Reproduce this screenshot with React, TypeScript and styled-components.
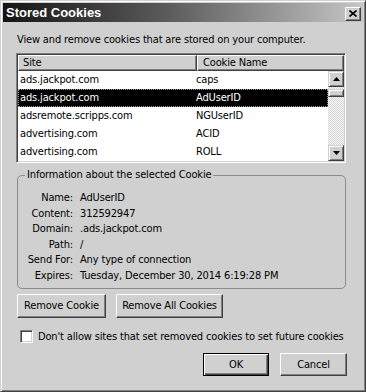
import React from "react";
import styled, { createGlobalStyle } from "styled-components";

const Global = createGlobalStyle`
  html, body { margin: 0; padding: 0; background: #d0d0d0; }
  body { font-family: "DejaVu Sans Condensed", "Liberation Sans", Arial, sans-serif; font-size: 11px; letter-spacing: -0.15px; color: #000; }
  * { box-sizing: border-box; }
`;

const Window = styled.div`
  width: 366px;
  height: 392px;
  background: #d0d0d0;
  border: 1px solid;
  border-color: #d0d0d0 #404040 #404040 #d0d0d0;
  box-shadow: inset 1px 1px #ffffff, inset -1px -1px #808080;
  padding: 2px;
  display: flex;
  flex-direction: column;
`;

const TitleBar = styled.div`
  height: 19px;
  background: linear-gradient(to right, #141414 0%, #5a5a5a 45%, #c6c6c6 100%);
  display: flex;
  align-items: center;
  justify-content: space-between;
  padding: 0 2px 0 3px;
`;

const TitleText = styled.span`
  color: #fff;
  font-family: "Liberation Sans", Arial, sans-serif;
  font-weight: bold;
  font-size: 13px;
  letter-spacing: 0;
`;

const CloseButton = styled.div`
  width: 16px;
  height: 14px;
  margin-top: 2px;
  background: #d0d0d0;
  border: 1px solid;
  border-color: #ffffff #404040 #404040 #ffffff;
  box-shadow: inset -1px -1px #808080;
  display: flex;
  align-items: center;
  justify-content: center;
`;

const Content = styled.div`
  padding: 0 0 0 13px;
  display: flex;
  flex-direction: column;
`;

const Description = styled.div`
  margin-top: 11px;
  line-height: 14px;
  padding-left: 1px;
  white-space: nowrap;
`;

const ListBox = styled.div`
  margin-top: 6px;
  width: 330px;
  height: 110px;
  border: 1px solid;
  border-color: #808080 #ffffff #ffffff #808080;
  box-shadow: inset 1px 1px #404040, inset -1px -1px #d0d0d0;
  padding: 1px;
  background: #fff;
  display: flex;
  flex-direction: column;
`;

const Header = styled.div`
  display: grid;
  grid-template-columns: 179px 1fr;
  height: 16px;
`;

const HeaderCell = styled.div<{ $pad: number }>`
  background: #d0d0d0;
  border: 1px solid;
  border-color: #ffffff #404040 #404040 #ffffff;
  box-shadow: inset -1px -1px #808080;
  padding-left: ${(p) => p.$pad}px;
  line-height: 13px;
  white-space: nowrap;
  overflow: hidden;
`;

const ListBody = styled.div`
  flex: 1;
  display: flex;
`;

const Rows = styled.div`
  flex: 1;
  display: flex;
  flex-direction: column;
`;

const Row = styled.div<{ $selected?: boolean }>`
  height: 18px;
  line-height: 18px;
  display: grid;
  grid-template-columns: 176px 1fr;
  padding-left: 2px;
  background: ${(p) => (p.$selected ? "#000" : "#fff")};
  color: ${(p) => (p.$selected ? "#fff" : "#000")};
  outline: ${(p) => (p.$selected ? "1px dotted #9a9a9a" : "none")};
  outline-offset: -1px;
  white-space: nowrap;
`;

const ScrollBar = styled.div`
  width: 16px;
  display: flex;
  flex-direction: column;
  background-color: #ffffff;
  background-image: conic-gradient(#d0d0d0 25%, #ffffff 0 50%, #d0d0d0 0 75%, #ffffff 0);
  background-size: 2px 2px;
`;

const ScrollButton = styled.div`
  width: 16px;
  height: 16px;
  background: #d0d0d0;
  border: 1px solid;
  border-color: #d0d0d0 #404040 #404040 #d0d0d0;
  box-shadow: inset 1px 1px #ffffff, inset -1px -1px #808080;
  display: flex;
  align-items: center;
  justify-content: center;
`;

const Thumb = styled.div`
  width: 16px;
  height: 8px;
  margin-top: 2px;
  background: #d0d0d0;
  border: 1px solid;
  border-color: #d0d0d0 #404040 #404040 #d0d0d0;
  box-shadow: inset 1px 1px #ffffff, inset -1px -1px #808080;
`;

const Track = styled.div`
  flex: 1;
`;

const GroupBox = styled.fieldset`
  margin: 5px 0 0 1px;
  width: 329px;
  padding: 8px 0 4px 0;
  border: 1px solid #8a8a8a;
  border-radius: 5px;
`;

const Legend = styled.legend`
  margin-left: 7px;
  padding: 0 2px;
  line-height: 14px;
`;

const InfoGrid = styled.div`
  display: grid;
  grid-template-columns: 55px 1fr;
  column-gap: 7px;
  grid-auto-rows: 15.6px;
  line-height: 15.6px;
`;

const Label = styled.div`
  text-align: right;
  white-space: nowrap;
`;

const Value = styled.div`
  white-space: nowrap;
`;

const ButtonRow = styled.div<{ $top: number; $end?: boolean }>`
  display: flex;
  gap: ${(p) => (p.$end ? 11 : 10)}px;
  margin-top: ${(p) => p.$top}px;
  margin-left: ${(p) => (p.$end ? 0 : 1)}px;
  justify-content: ${(p) => (p.$end ? "flex-end" : "flex-start")};
  width: 331px;
`;

const Button = styled.div<{ $w: number; $h: number; $default?: boolean }>`
  width: ${(p) => p.$w}px;
  height: ${(p) => p.$h}px;
  background: #d0d0d0;
  display: flex;
  align-items: center;
  justify-content: center;
  border: 1px solid;
  border-color: ${(p) =>
    p.$default ? "#000 #000 #000 #000" : "#ffffff #404040 #404040 #ffffff"};
  box-shadow: ${(p) =>
    p.$default
      ? "inset 1px 1px #ffffff, inset -1px -1px #404040, inset -2px -2px #808080"
      : "inset -1px -1px #808080"};
  white-space: nowrap;
`;

const CheckRow = styled.label`
  display: flex;
  align-items: center;
  margin-top: 12px;
  margin-left: 4px;
  gap: 5px;
  line-height: 14px;
  white-space: nowrap;
`;

const CheckBox = styled.span`
  width: 13px;
  height: 13px;
  flex: none;
  background: #fff;
  border: 1px solid;
  border-color: #808080 #ffffff #ffffff #808080;
  box-shadow: inset 1px 1px #404040, inset -1px -1px #d0d0d0;
`;

const Arrow = ({ up }: { up?: boolean }) => (
  <svg width="7" height="4" viewBox="0 0 7 4">
    <path d={up ? "M3.5 0 L7 4 L0 4 Z" : "M0 0 L7 0 L3.5 4 Z"} fill="#000" />
  </svg>
);

const rows = [
  ["ads.jackpot.com", "caps"],
  ["ads.jackpot.com", "AdUserID"],
  ["adsremote.scripps.com", "NGUserID"],
  ["advertising.com", "ACID"],
  ["advertising.com", "ROLL"],
];

const info = [
  ["Name:", "AdUserID"],
  ["Content:", "312592947"],
  ["Domain:", ".ads.jackpot.com"],
  ["Path:", "/"],
  ["Send For:", "Any type of connection"],
  ["Expires:", "Tuesday, December 30, 2014 6:19:28 PM"],
];

export default function App() {
  return (
    <>
      <Global />
      <Window>
        <TitleBar>
          <TitleText>Stored Cookies</TitleText>
          <CloseButton>
            <svg width="8" height="7" viewBox="0 0 8 7">
              <path d="M0.5 0.5 L7.5 6.5 M7.5 0.5 L0.5 6.5" stroke="#000" strokeWidth="1.6" />
            </svg>
          </CloseButton>
        </TitleBar>
        <Content>
          <Description>View and remove cookies that are stored on your computer.</Description>
          <ListBox>
            <Header>
              <HeaderCell $pad={4}>Site</HeaderCell>
              <HeaderCell $pad={5}>Cookie Name</HeaderCell>
            </Header>
            <ListBody>
              <Rows>
                {rows.map(([site, name], i) => (
                  <Row key={i} $selected={i === 1}>
                    <span>{site}</span>
                    <span>{name}</span>
                  </Row>
                ))}
              </Rows>
              <ScrollBar>
                <ScrollButton>
                  <Arrow up />
                </ScrollButton>
                <Thumb />
                <Track />
                <ScrollButton>
                  <Arrow />
                </ScrollButton>
              </ScrollBar>
            </ListBody>
          </ListBox>
          <GroupBox>
            <Legend>Information about the selected Cookie</Legend>
            <InfoGrid>
              {info.map(([l, v]) => (
                <React.Fragment key={l}>
                  <Label>{l}</Label>
                  <Value>{v}</Value>
                </React.Fragment>
              ))}
            </InfoGrid>
          </GroupBox>
          <ButtonRow $top={5}>
            <Button $w={89} $h={24}>Remove Cookie</Button>
            <Button $w={107} $h={24}>Remove All Cookies</Button>
          </ButtonRow>
          <CheckRow>
            <CheckBox />
            <span>Don't allow sites that set removed cookies to set future cookies</span>
          </CheckRow>
          <ButtonRow $top={9} $end>
            <Button $w={66} $h={23} $default>OK</Button>
            <Button $w={67} $h={23}>Cancel</Button>
          </ButtonRow>
        </Content>
      </Window>
    </>
  );
}
